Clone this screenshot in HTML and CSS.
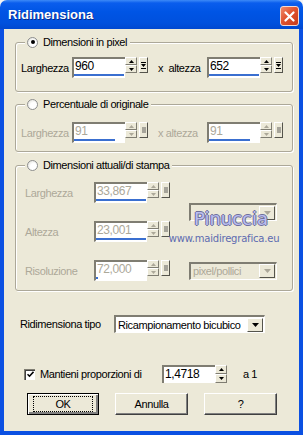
FILE: index.html
```html
<!DOCTYPE html>
<html lang="it">
<head>
  <meta charset="UTF-8" />
  <title>Ridimensiona</title>
  <link rel="stylesheet" href="styles.css">
</head>
<body>
  <div class="window">
    <div class="titlebar">
      <span class="title">Ridimensiona</span>
      <span class="close">
        <svg width="11" height="11" viewBox="0 0 11 11"><path d="M1.5 1.5l8 8M9.5 1.5l-8 8" stroke="#fff" stroke-width="2.2" stroke-linecap="round"/></svg>
      </span>
    </div>

    <div class="client">
      <div class="group g1">
        <div class="legend"><span class="radio checked"></span>Dimensioni in pixel</div>
        <div class="row">
          <span class="lbl lbl-w">Larghezza</span>
          <span class="field">
            <span class="box"><span class="val">960</span><span class="bar" style="width:98%"></span></span>
            <span class="spinner"><span class="sbtn"><svg width="5" height="3"><path d="M0 3h5L2.5 0z"/></svg></span><span class="sbtn"><svg width="5" height="3"><path d="M0 0h5L2.5 3z"/></svg></span></span>
            <span class="drop"><svg width="5" height="7"><path d="M0 0h5v1H0zM0 2h5L2.5 5zM0 6h5v1H0z"/></svg></span>
          </span>
          <span class="lbl lbl-x">x &nbsp;altezza</span>
          <span class="field">
            <span class="box"><span class="val">652</span><span class="bar" style="width:98%"></span></span>
            <span class="spinner"><span class="sbtn"><svg width="5" height="3"><path d="M0 3h5L2.5 0z"/></svg></span><span class="sbtn"><svg width="5" height="3"><path d="M0 0h5L2.5 3z"/></svg></span></span>
            <span class="drop"><svg width="5" height="7"><path d="M0 0h5v1H0zM0 2h5L2.5 5zM0 6h5v1H0z"/></svg></span>
          </span>
        </div>
      </div>

      <div class="group g2">
        <div class="legend"><span class="radio"></span>Percentuale di originale</div>
        <div class="row off">
          <span class="lbl lbl-w">Larghezza</span>
          <span class="field">
            <span class="box"><span class="val">91</span><span class="bar" style="width:80%"></span></span>
            <span class="spinner"><span class="sbtn"><svg width="5" height="3"><path d="M0 3h5L2.5 0z"/></svg></span><span class="sbtn"><svg width="5" height="3"><path d="M0 0h5L2.5 3z"/></svg></span></span>
            <span class="drop"><span class="sq"></span></span>
          </span>
          <span class="lbl lbl-x">x altezza</span>
          <span class="field">
            <span class="box"><span class="val">91</span><span class="bar" style="width:80%"></span></span>
            <span class="spinner"><span class="sbtn"><svg width="5" height="3"><path d="M0 3h5L2.5 0z"/></svg></span><span class="sbtn"><svg width="5" height="3"><path d="M0 0h5L2.5 3z"/></svg></span></span>
            <span class="drop"><span class="sq"></span></span>
          </span>
        </div>
      </div>

      <div class="group g3">
        <div class="legend"><span class="radio"></span>Dimensioni attuali/di stampa</div>
        <div class="grid off">
          <div class="row r1">
            <span class="lbl lbl-3">Larghezza</span>
            <span class="field">
              <span class="box"><span class="val">33,867</span><span class="bar" style="width:98%"></span></span>
              <span class="spinner"><span class="sbtn"><svg width="5" height="3"><path d="M0 3h5L2.5 0z"/></svg></span><span class="sbtn"><svg width="5" height="3"><path d="M0 0h5L2.5 3z"/></svg></span></span>
              <span class="drop"><span class="sq"></span></span>
            </span>
          </div>
          <div class="row r2">
            <span class="lbl lbl-3">Altezza</span>
            <span class="field">
              <span class="box"><span class="val">23,001</span><span class="bar" style="width:98%"></span></span>
              <span class="spinner"><span class="sbtn"><svg width="5" height="3"><path d="M0 3h5L2.5 0z"/></svg></span><span class="sbtn"><svg width="5" height="3"><path d="M0 0h5L2.5 3z"/></svg></span></span>
              <span class="drop"><span class="sq"></span></span>
            </span>
          </div>
          <div class="row r3">
            <span class="lbl lbl-3">Risoluzione</span>
            <span class="field">
              <span class="box"><span class="val">72,000</span><span class="bar" style="width:3%"></span></span>
              <span class="spinner"><span class="sbtn"><svg width="5" height="3"><path d="M0 3h5L2.5 0z"/></svg></span><span class="sbtn"><svg width="5" height="3"><path d="M0 0h5L2.5 3z"/></svg></span></span>
              <span class="drop"><span class="sq"></span></span>
            </span>
          </div>
          <div class="combo dis c1">
            <span class="ctext"></span>
            <span class="cbtn"><svg width="7" height="4"><path d="M0 0h7L3.5 4z" fill="#aca899"/></svg></span>
          </div>
          <div class="combo dis c2">
            <span class="ctext">pixel/pollici</span>
            <span class="cbtn"><svg width="7" height="4"><path d="M0 0h7L3.5 4z" fill="#aca899"/></svg></span>
          </div>
        </div>
      </div>

      <div class="line tipo">
        <span class="lbl lbl-tipo">Ridimensiona tipo</span>
        <div class="combo sel">
          <span class="ctext">Ricampionamento bicubico</span>
          <span class="cbtn"><svg width="7" height="4"><path d="M0 0h7L3.5 4z"/></svg></span>
        </div>
      </div>

      <div class="line keep">
        <span class="check"><svg width="7" height="7" viewBox="0 0 7 7"><path d="M0.5 3.2l2 2 4-4.4" fill="none" stroke="#000" stroke-width="1.6"/></svg></span>
        <span class="lbl lbl-keep">Mantieni proporzioni di</span>
        <span class="field">
          <span class="box"><span class="val">1,4718</span></span>
          <span class="spinner"><span class="sbtn"><svg width="5" height="3"><path d="M0 3h5L2.5 0z"/></svg></span><span class="sbtn"><svg width="5" height="3"><path d="M0 0h5L2.5 3z"/></svg></span></span>
        </span>
        <span class="lbl lbl-a1">a 1</span>
      </div>

      <div class="buttons">
        <button class="btn default"><span class="focus">OK</span></button>
        <button class="btn">Annulla</button>
        <button class="btn">?</button>
      </div>
    </div>

    <div class="watermark">
      <span class="wm-name">Pinuccia</span>
      <span class="wm-url">www.maidiregrafica.eu</span>
    </div>
  </div>
</body>
</html>
```

FILE: styles.css
```css
html, body {
  margin: 0;
  padding: 0;
  background: #f4f4f4;
}
body {
  font-family: "Liberation Sans", Arial, sans-serif;
  font-size: 11px;
  letter-spacing: -0.4px;
  color: #000;
  white-space: nowrap;
}
.window {
  width: 303px;
  height: 435px;
  position: relative;
  display: flex;
  flex-direction: column;
}
.titlebar {
  height: 29px;
  flex: none;
  display: flex;
  align-items: center;
  padding: 0 4px 0 8px;
  border-radius: 7px 7px 0 0;
  background: linear-gradient(#3d8af7 0, #0a5ded 3px, #0055e5 40%, #0050dd 80%, #0048d0 100%);
}
.title {
  flex: 1;
  color: #fff;
  font-weight: bold;
  font-size: 13px;
  letter-spacing: 0;
  text-shadow: 1px 1px 0 #0a2a8a;
}
.close {
  width: 17px;
  height: 18px;
  margin-top: 3px;
  display: flex;
  align-items: center;
  justify-content: center;
  border: 1px solid #f4d9d0;
  border-radius: 3px;
  background: linear-gradient(135deg, #f08a6a 0, #e0532f 45%, #c83a1a 100%);
}
.client {
  flex: 1;
  background: #ece9d8;
  border: 4px solid #0b50e2;
  border-top: 0;
  padding: 0 0 0 16px;
}

/* group boxes: the legend sits across the top border */
.group {
  margin: 13px 6px 0 -5px;
  padding: 0 5px 13px;
  border: 1px solid #aca899;
  border-radius: 3px;
  box-shadow: 1px 1px 0 #fff, inset 1px 1px 0 #fff;
}
.g2 {
  margin-top: 12px;
  padding-bottom: 8px;
}
.g3 {
  margin-top: 13px;
  padding-bottom: 9px;
}
.legend {
  display: flex;
  align-items: center;
  gap: 5px;
  width: max-content;
  height: 14px;
  line-height: 14px;
  margin: -8px 0 0 4px;
  padding: 0 3px 0 2px;
  background: #ece9d8;
}
.radio {
  width: 11px;
  height: 11px;
  box-sizing: border-box;
  border-radius: 50%;
  border: 1px solid #8e8f8f;
  background: radial-gradient(circle at 65% 65%, #fff 40%, #dcdcd4 100%);
  display: flex;
  align-items: center;
  justify-content: center;
}
.radio.checked::after {
  content: "";
  width: 4px;
  height: 4px;
  border-radius: 50%;
  background: #000;
}

.row {
  display: flex;
  align-items: center;
  height: 21px;
}
.g1 .row {
  margin-top: 8px;
}
.g2 .row {
  margin-top: 11px;
}
.lbl {
  flex: none;
}
.lbl-w {
  width: 51px;
}
.lbl-x {
  margin-left: 10px;
  width: 49px;
}
.off .lbl, .off .val {
  color: #aca899;
}

/* spin fields */
.field {
  display: flex;
  flex: none;
  height: 21px;
}
.box {
  width: 53px;
  box-sizing: border-box;
  background: #fff;
  border-top: 2px solid #7f7d72;
  border-left: 2px solid #7f7d72;
  border-bottom: 1px solid #fff;
  display: flex;
  flex-direction: column;
}
.val {
  flex: 1;
  padding-left: 1px;
  line-height: 14px;
  font-size: 12px;
}
.bar {
  height: 2px;
  margin-bottom: 1px;
  background: #3a6fd0;
}
.spinner {
  width: 12px;
  height: 16px;
  display: flex;
  flex-direction: column;
  background: #fff;
}
.sbtn {
  flex: 1;
  box-sizing: border-box;
  display: flex;
  align-items: center;
  justify-content: center;
  background: #ece9d8;
  border: 1px solid;
  border-color: #fff #7f7d72 #7f7d72 #fff;
}
.off .sbtn svg {
  fill: #aca899;
}
.drop {
  width: 9px;
  height: 16px;
  margin-left: 2px;
  box-sizing: border-box;
  display: flex;
  align-items: center;
  justify-content: center;
  background: #ece9d8;
  border: 1px solid;
  border-color: #fff #55544c #55544c #fff;
}
.sq {
  width: 4px;
  height: 6px;
  background: #a6a49a;
}

/* group 3 grid */
.grid {
  display: grid;
  grid-template-columns: 148px 1fr;
  grid-template-rows: 21px 21px 21px;
  row-gap: 18px;
  margin-top: 10px;
}
.r1 { grid-area: 1 / 1; }
.r2 { grid-area: 2 / 1; }
.r3 { grid-area: 3 / 1; }
.lbl-3 {
  margin-left: 4px;
  width: 69px;
}
.c1 {
  grid-area: 1 / 2 / 3 / 3;
  align-self: center;
}
.c2 {
  grid-area: 3 / 2;
  align-self: center;
}

/* combos */
.combo {
  width: 88px;
  height: 18px;
  margin-left: 20px;
  box-sizing: border-box;
  display: flex;
  align-items: center;
  border-top: 2px solid #7f7d72;
  border-left: 2px solid #7f7d72;
  border-right: 1px solid #fff;
  border-bottom: 1px solid #fff;
}
.combo.dis {
  background: #ece9d8;
  color: #aca899;
}
.ctext {
  flex: 1;
  padding-left: 2px;
  overflow: hidden;
}
.cbtn {
  width: 16px;
  height: 14px;
  flex: none;
  box-sizing: border-box;
  display: flex;
  align-items: center;
  justify-content: center;
  background: #ece9d8;
  border: 1px solid;
  border-color: #fff #55544c #55544c #fff;
  margin-right: 1px;
}
.sel {
  width: 151px;
  margin-left: 0;
  background: #fff;
}

/* bottom lines */
.line {
  display: flex;
  align-items: center;
}
.tipo {
  margin-top: 24px;
  height: 18px;
}
.lbl-tipo {
  width: 94px;
}
.keep {
  margin-top: 32px;
  height: 18px;
}
.keep .field {
  height: 18px;
}
.keep .box {
  width: 53px;
  border-bottom: 0;
}
.keep .spinner {
  height: 18px;
}
.check {
  width: 11px;
  height: 11px;
  flex: none;
  margin-left: 4px;
  box-sizing: border-box;
  border-top: 1px solid #7f7d72;
  border-left: 1px solid #7f7d72;
  background: #fff;
  box-shadow: inset 1px 1px 0 #404040;
  display: flex;
  align-items: center;
  justify-content: center;
}
.lbl-keep {
  margin-left: 5px;
  width: 122px;
}
.lbl-a1 {
  margin-left: 16px;
}

.buttons {
  display: flex;
  gap: 16px;
  margin: 10px 0 0 7px;
}
.btn {
  width: 73px;
  height: 22px;
  padding: 0;
  font: inherit;
  letter-spacing: inherit;
  color: #000;
  background: #ece9d8;
  border: 1px solid;
  border-color: #fff #404040 #404040 #fff;
  box-shadow: inset -1px -1px 0 #808080;
}
.btn.default {
  width: 72px;
  border: 1px solid #000;
  box-shadow: inset 1px 1px 0 #fff, inset -2px -2px 0 #808080;
  display: flex;
  align-items: center;
  justify-content: center;
}
.focus {
  width: 58px;
  height: 14px;
  line-height: 14px;
  border: 1px dotted #000;
}

/* watermark over the dialog */
.watermark {
  position: absolute;
  left: 165px;
  top: 209px;
  width: 118px;
  display: flex;
  flex-direction: column;
  align-items: center;
  gap: 4px;
  letter-spacing: 0;
}
.wm-name {
  font-family: "DejaVu Sans", sans-serif;
  font-size: 18px;
  line-height: 20px;
  margin-left: 14px;
  color: #b9bdf0;
  text-shadow: 1px 0 0 #6e6f9c, -1px 0 0 #6e6f9c, 0 1px 0 #6e6f9c, 0 -1px 0 #6e6f9c;
}
.wm-url {
  font-family: "DejaVu Sans", sans-serif;
  font-size: 10px;
  line-height: 12px;
  letter-spacing: -0.2px;
  color: #5d6bb0;
}
```
